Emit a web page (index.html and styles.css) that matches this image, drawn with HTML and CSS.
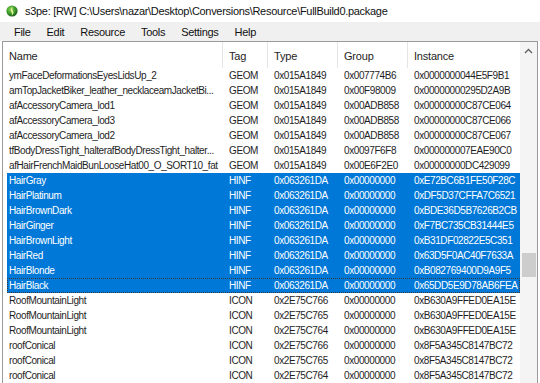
FILE: index.html
```html
<!DOCTYPE html>
<html lang="en">
<head>
    <meta charset="UTF-8">
    <title>s3pe</title>
    <link rel="stylesheet" href="styles.css">
</head>
<body>

    <div class="window">
        <!-- title bar -->
        <div class="titlebar">
            <svg class="app-icon" width="12" height="12" viewBox="0 0 12 12">
                <defs>
                    <radialGradient id="ball" cx="40%" cy="35%" r="65%">
                        <stop offset="0" stop-color="#8fd65a"/>
                        <stop offset="0.6" stop-color="#3a9a2a"/>
                        <stop offset="1" stop-color="#1d5a16"/>
                    </radialGradient>
                </defs>
                <circle cx="6" cy="6" r="5.6" fill="url(#ball)"/>
                <path d="M6.8 1.2 C4.6 3.2 4.4 5.6 5.6 7.4 C6.4 8.6 6.2 9.8 5.2 10.8 C7.6 9.6 8 7.6 7 6 C6.2 4.6 6 3 6.8 1.2 Z" fill="#e8f29a"/>
            </svg>
            <span>s3pe: [RW] C:\Users\nazar\Desktop\Conversions\Resource\FullBuild0.package</span>
        </div>

        <!-- menu -->
        <div class="menubar">
            <span class="menu-item">File</span>
            <span class="menu-item">Edit</span>
            <span class="menu-item">Resource</span>
            <span class="menu-item">Tools</span>
            <span class="menu-item">Settings</span>
            <span class="menu-item">Help</span>
        </div>

        <!-- resource list -->
        <div class="listview">
            <div class="list">
                <div class="header">
                    <div class="hcell">Name</div>
                    <div class="hcell">Tag</div>
                    <div class="hcell">Type</div>
                    <div class="hcell">Group</div>
                    <div class="hcell">Instance</div>
                </div>

                <div class="row"><div>ymFaceDeformationsEyesLidsUp_2</div><div>GEOM</div><div>0x015A1849</div><div>0x007774B6</div><div>0x0000000044E5F9B1</div></div>
                <div class="row"><div>amTopJacketBiker_leather_necklaceamJacketBi...</div><div>GEOM</div><div>0x015A1849</div><div>0x00F98009</div><div>0x00000000295D2A9B</div></div>
                <div class="row"><div>afAccessoryCamera_lod1</div><div>GEOM</div><div>0x015A1849</div><div>0x00ADB858</div><div>0x00000000C87CE064</div></div>
                <div class="row"><div>afAccessoryCamera_lod3</div><div>GEOM</div><div>0x015A1849</div><div>0x00ADB858</div><div>0x00000000C87CE066</div></div>
                <div class="row"><div>afAccessoryCamera_lod2</div><div>GEOM</div><div>0x015A1849</div><div>0x00ADB858</div><div>0x00000000C87CE067</div></div>
                <div class="row"><div>tfBodyDressTight_halterafBodyDressTight_halter...</div><div>GEOM</div><div>0x015A1849</div><div>0x0097F6F8</div><div>0x000000007EAE90C0</div></div>
                <div class="row"><div>afHairFrenchMaidBunLooseHat00_O_SORT10_fat</div><div>GEOM</div><div>0x015A1849</div><div>0x00E6F2E0</div><div>0x00000000DC429099</div></div>

                <div class="row selected"><div>HairGray</div><div>HINF</div><div>0x063261DA</div><div>0x00000000</div><div>0xE72BC6B1FE50F28C</div></div>
                <div class="row selected"><div>HairPlatinum</div><div>HINF</div><div>0x063261DA</div><div>0x00000000</div><div>0xDF5D37CFFA7C6521</div></div>
                <div class="row selected"><div>HairBrownDark</div><div>HINF</div><div>0x063261DA</div><div>0x00000000</div><div>0xBDE36D5B7626B2CB</div></div>
                <div class="row selected"><div>HairGinger</div><div>HINF</div><div>0x063261DA</div><div>0x00000000</div><div>0xF7BC735CB31444E5</div></div>
                <div class="row selected"><div>HairBrownLight</div><div>HINF</div><div>0x063261DA</div><div>0x00000000</div><div>0xB31DF02822E5C351</div></div>
                <div class="row selected"><div>HairRed</div><div>HINF</div><div>0x063261DA</div><div>0x00000000</div><div>0x63D5F0AC40F7633A</div></div>
                <div class="row selected"><div>HairBlonde</div><div>HINF</div><div>0x063261DA</div><div>0x00000000</div><div>0xB082769400D9A9F5</div></div>
                <div class="row selected focused"><div>HairBlack</div><div>HINF</div><div>0x063261DA</div><div>0x00000000</div><div>0x65DD5E9D78AB6FEA</div></div>

                <div class="row"><div>RoofMountainLight</div><div>ICON</div><div>0x2E75C766</div><div>0x00000000</div><div>0xB630A9FFED0EA15E</div></div>
                <div class="row"><div>RoofMountainLight</div><div>ICON</div><div>0x2E75C765</div><div>0x00000000</div><div>0xB630A9FFED0EA15E</div></div>
                <div class="row"><div>RoofMountainLight</div><div>ICON</div><div>0x2E75C764</div><div>0x00000000</div><div>0xB630A9FFED0EA15E</div></div>
                <div class="row"><div>roofConical</div><div>ICON</div><div>0x2E75C766</div><div>0x00000000</div><div>0x8F5A345C8147BC72</div></div>
                <div class="row"><div>roofConical</div><div>ICON</div><div>0x2E75C765</div><div>0x00000000</div><div>0x8F5A345C8147BC72</div></div>
                <div class="row"><div>roofConical</div><div>ICON</div><div>0x2E75C764</div><div>0x00000000</div><div>0x8F5A345C8147BC72</div></div>
            </div>

            <!-- vertical scrollbar -->
            <div class="scrollbar">
                <div class="scroll-arrow">
                    <svg width="9" height="6" viewBox="0 0 9 6"><path d="M1 5 L4.5 1.5 L8 5" fill="none" stroke="#606060" stroke-width="1.3"/></svg>
                </div>
                <div class="scroll-thumb"></div>
            </div>
        </div>
    </div>

</body>
</html>
```
FILE: styles.css
```css
/* window */
body {
    margin: 0;
    padding: 0;
    background: #ffffff;
    font-family: 'Liberation Sans', Arial, sans-serif;
    color: #1e1e1e;
    overflow: hidden;
}

.window {
    width: 540px;
    height: 383px;
    display: flex;
    flex-direction: column;
}

.titlebar {
    height: 22px;
    display: flex;
    align-items: center;
    padding-left: 6px;
    font-size: 11px;
    letter-spacing: -0.3px;
    color: #111;
    background: #fff;
}

.app-icon {
    margin-right: 7px;
    flex-shrink: 0;
}

.menubar {
    height: 19px;
    display: flex;
    align-items: center;
    background: #f0f0f0;
    font-size: 11px;
    letter-spacing: -0.3px;
    color: #111;
    padding-left: 6px;
}

.menu-item {
    padding: 0 8px;
}

/* list view */
.listview {
    flex: 1;
    display: flex;
    margin: 0 2px;
    border: 1px solid #9a9a9a;
    border-bottom: none;
    min-height: 0;
    overflow: hidden;
}

.list {
    flex: 1;
    display: flex;
    flex-direction: column;
    min-width: 0;
}

.header {
    height: 26px;
    display: grid;
    grid-template-columns: 220px 45px 70px 70px 1fr;
    font-size: 11px;
    letter-spacing: -0.2px;
    flex-shrink: 0;
}

.hcell {
    border-right: 1px solid #e5e5e5;
    padding: 8px 0 0 6px;
    white-space: nowrap;
}

.hcell:last-child {
    border-right: none;
}

.row {
    height: 15px;
    line-height: 15px;
    margin-left: 4px;
    display: grid;
    grid-template-columns: 216px 45px 70px 70px 1fr;
    font-size: 10px;
    letter-spacing: -0.4px;
    flex-shrink: 0;
}

.row > div {
    padding-left: 6px;
    white-space: nowrap;
    overflow: hidden;
}

.row > div:first-child {
    padding-left: 2px;
}

.row.selected {
    background: #0078d7;
    color: #ffffff;
}

.row.focused {
    outline: 1px dotted #3a3a3a;
    outline-offset: -1px;
}

/* scrollbar */
.scrollbar {
    width: 17px;
    flex-shrink: 0;
    background: #f4f4f4;
    display: flex;
    flex-direction: column;
    align-items: center;
}

.scroll-arrow {
    height: 17px;
    width: 17px;
    display: flex;
    align-items: center;
    justify-content: center;
}

.scroll-thumb {
    width: 14px;
    height: 24px;
    margin-top: 194px;
    background: #cdcdcd;
}
```
